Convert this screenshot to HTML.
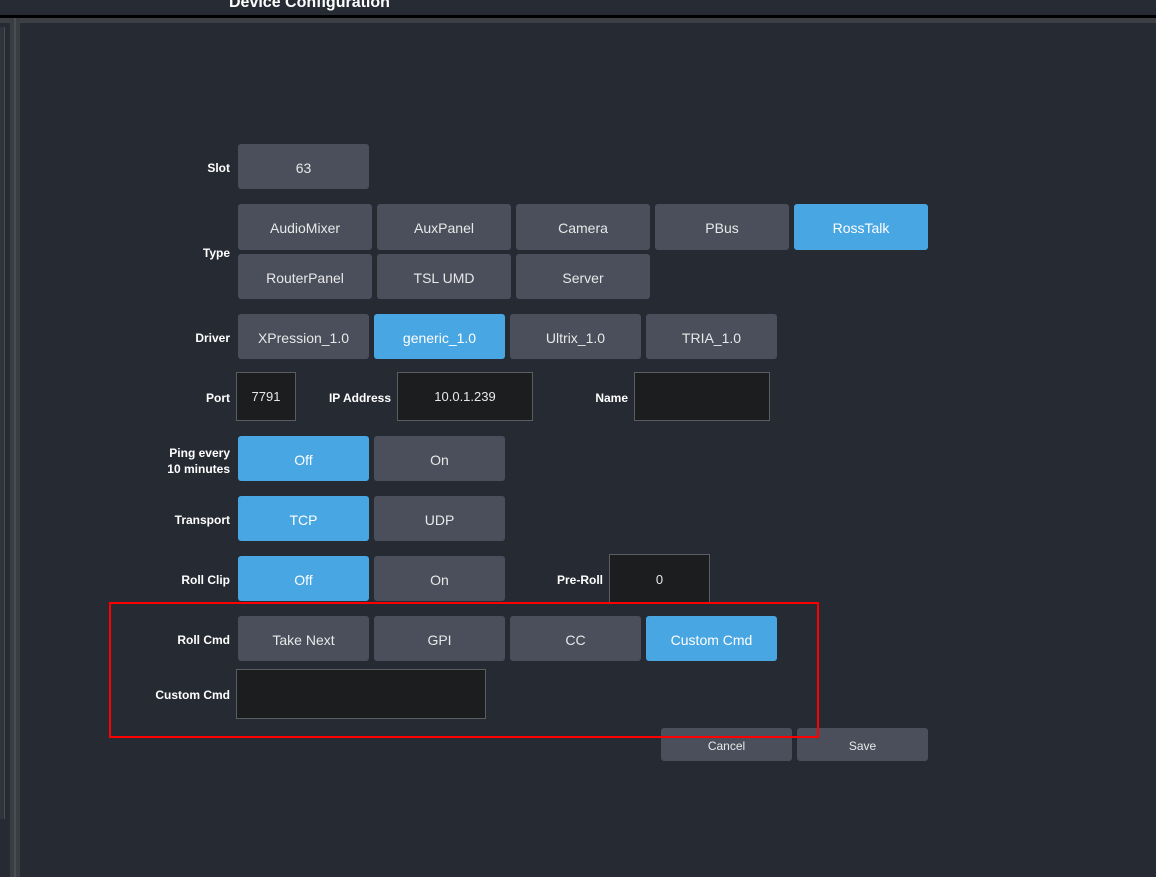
<!DOCTYPE html>
<html><head><style>
body{margin:0;width:1156px;height:877px;background:#262a32;position:relative;overflow:hidden;font-family:"Liberation Sans",Arial,sans-serif;}
.a{position:absolute;box-sizing:border-box;}
.b{position:absolute;box-sizing:border-box;background:#4a4f5b;color:#e8e8e8;font-size:14px;display:flex;align-items:center;justify-content:center;border-radius:3px;padding-top:2px;}
.on{background:#48a6e2;color:#fff;}
.i{position:absolute;box-sizing:border-box;background:#1c1d1f;border:1px solid #5a5d62;color:#e8e8e8;font-size:13px;display:flex;align-items:center;justify-content:center;}
.l{position:absolute;color:#fff;font-weight:bold;font-size:12px;text-align:right;}
</style></head><body>
<div class="a" style="left:0;top:0;width:1156px;height:15px;background:#272b33"></div>
<div class="a" style="left:229px;top:-6px;color:#fff;font-weight:bold;font-size:16px">Device Configuration</div>
<div class="a" style="left:0;top:15px;width:1156px;height:3px;background:#000"></div>
<div class="a" style="left:0;top:18px;width:1156px;height:5px;background:#3c3f44"></div>
<div class="a" style="left:0;top:27px;width:5px;height:792px;border-right:1px solid #4a4d52;background:#30343a"></div>
<div class="a" style="left:10px;top:18px;width:10px;height:859px;background:#3a3d42"></div>
<div class="a" style="left:14px;top:18px;width:2px;height:859px;background:#4a4d52"></div>

<div class="l" style="left:150px;width:80px;top:161px">Slot</div>
<div class="b" style="left:238px;top:144px;width:131px;height:45px">63</div>

<div class="l" style="left:150px;width:80px;top:246px">Type</div>
<div class="b" style="left:238px;top:204px;width:134px;height:46px">AudioMixer</div>
<div class="b" style="left:377px;top:204px;width:134px;height:46px">AuxPanel</div>
<div class="b" style="left:516px;top:204px;width:134px;height:46px">Camera</div>
<div class="b" style="left:655px;top:204px;width:134px;height:46px">PBus</div>
<div class="b on" style="left:794px;top:204px;width:134px;height:46px">RossTalk</div>
<div class="b" style="left:238px;top:254px;width:134px;height:45px">RouterPanel</div>
<div class="b" style="left:377px;top:254px;width:134px;height:45px">TSL UMD</div>
<div class="b" style="left:516px;top:254px;width:134px;height:45px">Server</div>

<div class="l" style="left:150px;width:80px;top:331px">Driver</div>
<div class="b" style="left:238px;top:314px;width:131px;height:45px">XPression_1.0</div>
<div class="b on" style="left:374px;top:314px;width:131px;height:45px">generic_1.0</div>
<div class="b" style="left:510px;top:314px;width:131px;height:45px">Ultrix_1.0</div>
<div class="b" style="left:646px;top:314px;width:131px;height:45px">TRIA_1.0</div>

<div class="l" style="left:150px;width:80px;top:391px">Port</div>
<div class="i" style="left:236px;top:372px;width:60px;height:49px">7791</div>
<div class="l" style="left:300px;width:91px;top:391px">IP Address</div>
<div class="i" style="left:397px;top:372px;width:136px;height:49px">10.0.1.239</div>
<div class="l" style="left:560px;width:68px;top:391px">Name</div>
<div class="i" style="left:634px;top:372px;width:136px;height:49px"></div>

<div class="l" style="left:130px;width:100px;top:445px;line-height:16px">Ping every<br>10 minutes</div>
<div class="b on" style="left:238px;top:436px;width:131px;height:45px">Off</div>
<div class="b" style="left:374px;top:436px;width:131px;height:45px">On</div>

<div class="l" style="left:150px;width:80px;top:513px">Transport</div>
<div class="b on" style="left:238px;top:496px;width:131px;height:45px">TCP</div>
<div class="b" style="left:374px;top:496px;width:131px;height:45px">UDP</div>

<div class="l" style="left:150px;width:80px;top:573px">Roll Clip</div>
<div class="b on" style="left:238px;top:556px;width:131px;height:45px">Off</div>
<div class="b" style="left:374px;top:556px;width:131px;height:45px">On</div>
<div class="l" style="left:530px;width:73px;top:573px">Pre-Roll</div>
<div class="i" style="left:609px;top:554px;width:101px;height:50px">0</div>

<div class="l" style="left:150px;width:80px;top:633px">Roll Cmd</div>
<div class="b" style="left:238px;top:616px;width:131px;height:45px">Take Next</div>
<div class="b" style="left:374px;top:616px;width:131px;height:45px">GPI</div>
<div class="b" style="left:510px;top:616px;width:131px;height:45px">CC</div>
<div class="b on" style="left:646px;top:616px;width:131px;height:45px">Custom Cmd</div>

<div class="l" style="left:130px;width:100px;top:688px">Custom Cmd</div>
<div class="i" style="left:236px;top:669px;width:250px;height:50px"></div>

<div class="b" style="left:661px;top:728px;width:131px;height:33px;font-size:12px">Cancel</div>
<div class="b" style="left:797px;top:728px;width:131px;height:33px;font-size:12px">Save</div>

<div class="a" style="left:109px;top:602px;width:710px;height:136px;border:2px solid #f00"></div>
</body></html>
